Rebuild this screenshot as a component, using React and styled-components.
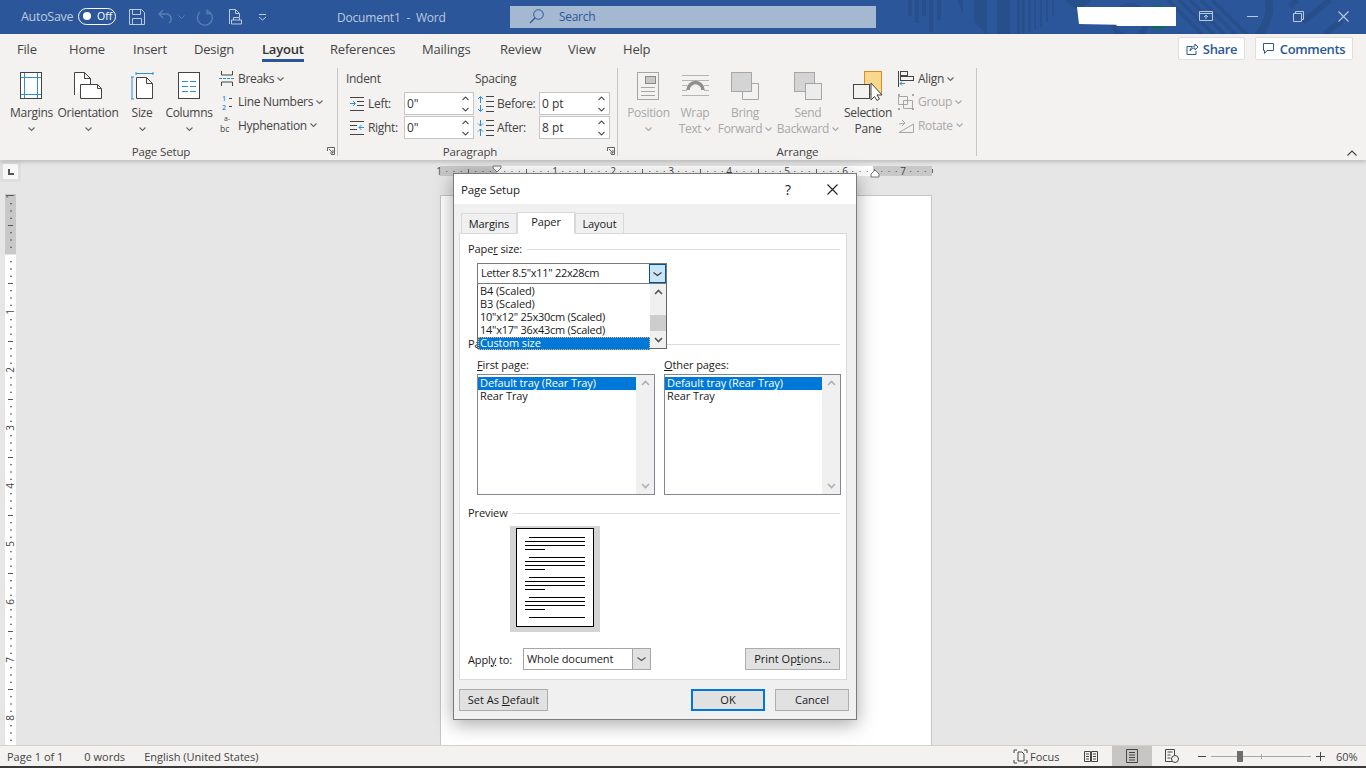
import React from 'react';
import styled, { createGlobalStyle } from 'styled-components';

const FONT = '"Open Sans", "Noto Sans", sans-serif';
const WORD_BLUE = '#2b579a';
const PATTERN_BLUE = '#274f8c';
const INK = '#444444';
const DIM = '#a8a8a8';
const SKY = '#2b8fd8';
const TITLE_DIM = '#bccadf';

const GlobalStyle = createGlobalStyle`
  html, body { margin: 0; padding: 0; }
  body { width: 1366px; height: 768px; overflow: hidden; font-family: ${FONT}; background: #e6e6e6; }
  * { box-sizing: border-box; }
  u { text-underline-offset: 1px; }
`;

const Shell = styled.div`
  position: relative;
  width: 1366px;
  height: 768px;
  display: flex;
  flex-direction: column;
  overflow: hidden;
`;

const Svg = styled.svg`
  display: block;
  flex: none;
  overflow: visible;
`;

const Icon = ({ w, h, children, ...rest }) => (
  <Svg width={w} height={h} viewBox={`0 0 ${w} ${h}`} fill="none" {...rest}>{children}</Svg>
);

/* ---------- title bar ---------- */

const TitleBar = styled.header`
  position: relative;
  flex: none;
  height: 34px;
  background: ${WORD_BLUE};
  display: flex;
  align-items: center;
  color: ${TITLE_DIM};
  font-size: 12px;
  overflow: hidden;
`;

const Pattern = styled(Svg)`
  position: absolute;
  left: 900px;
  top: 0;
  overflow: hidden;
`;

const AutoSave = styled.span`
  margin-left: 21px;
  font-size: 12.5px;
  letter-spacing: -0.3px;
  width: 57px;
  margin-top: -2px;
`;

const Toggle = styled.span`
  position: relative;
  width: 38px;
  height: 17px;
  margin-top: -2px;
  border: 1.5px solid #fff;
  border-radius: 9px;
  color: #fff;
  font-size: 10.5px;
  line-height: 14px;
  padding-left: 18px;
  &::before {
    content: '';
    position: absolute;
    left: 4px;
    top: 3px;
    width: 8px;
    height: 8px;
    border-radius: 50%;
    background: #fff;
  }
`;

const Quick = styled.div`
  display: flex;
  align-items: center;
  margin-left: 13px;
  width: 208px;
  flex: none;
`;

const DocTitle = styled.span`
  width: 173px;
  flex: none;
  font-size: 12px;
  letter-spacing: -0.2px;
  white-space: pre;
`;

const SearchBox = styled.div`
  width: 366px;
  height: 22px;
  flex: none;
  margin-top: -1px;
  background: #a4b8d2;
  color: ${WORD_BLUE};
  display: flex;
  align-items: center;
  padding-left: 19px;
  gap: 15px;
  font-size: 12px;
  letter-spacing: -0.3px;
`;

const Redacted = styled.div`
  position: absolute;
  left: 1077px;
  top: 7px;
  width: 99px;
  height: 19px;
  background: #fff;
  clip-path: polygon(0 0, 100% 0, 100% 100%, 40% 100%, 40% 94%, 2% 90%);
`;

const WindowButtons = styled.div`
  position: absolute;
  right: 17px;
  top: 0;
  height: 32px;
  display: flex;
  align-items: center;
  gap: 34px;
`;

/* ---------- ribbon ---------- */

const Ribbon = styled.section`
  position: relative;
  z-index: 2;
  flex: none;
  height: 126px;
  background: #f3f2f1;
  box-shadow: 0 2px 4px rgba(0, 0, 0, 0.18);
`;

const TabRow = styled.nav`
  height: 32px;
  display: flex;
  align-items: center;
  padding-left: 17px;
  font-size: 13px;
  letter-spacing: -0.2px;
  color: ${INK};
`;

const RibbonTab = styled.span`
  width: ${(p) => p.$w}px;
  flex: none;
  height: 32px;
  line-height: 30px;
`;

const TabText = styled.span`
  position: relative;
  display: inline-block;
  height: 32px;
  color: ${(p) => (p.$active ? '#333' : INK)};
  font-weight: ${(p) => (p.$active ? 600 : 400)};
  &::after {
    content: '';
    display: ${(p) => (p.$active ? 'block' : 'none')};
    position: absolute;
    left: 0;
    right: 0;
    top: 25px;
    height: 3px;
    background: ${WORD_BLUE};
  }
`;

const ActionButtons = styled.div`
  position: absolute;
  right: 13px;
  top: 3px;
  display: flex;
  gap: 10px;
`;

const ActionButton = styled.button`
  height: 23px;
  width: ${(p) => p.$w}px;
  border: 1px solid #e1dfdd;
  border-radius: 2px;
  background: #fff;
  color: ${WORD_BLUE};
  font: 600 13px ${FONT};
  letter-spacing: -0.35px;
  padding: 0;
  display: flex;
  align-items: center;
  justify-content: center;
  gap: 5px;
`;

const GroupRow = styled.div`
  display: flex;
  height: 94px;
`;

const Group = styled.div`
  position: relative;
  width: ${(p) => p.$w}px;
  flex: none;
  display: flex;
  flex-direction: column;
  &::after {
    content: '';
    position: absolute;
    right: 0;
    top: 2px;
    bottom: 4px;
    width: 1px;
    background: #c8c6c4;
  }
`;

const GroupBody = styled.div`
  height: 78px;
  display: flex;
  align-items: flex-start;
  padding-left: ${(p) => p.$pad || 0}px;
`;

const GroupLabel = styled.div`
  position: relative;
  height: 16px;
  line-height: 16px;
  text-align: center;
  padding-right: ${(p) => p.$shift || 0}px;
  font-size: 11.5px;
  letter-spacing: -0.15px;
  color: ${INK};
`;

const Launcher = styled(Svg)`
  position: absolute;
  right: 3px;
  top: 3px;
`;

const BigButton = styled.div`
  width: ${(p) => p.$w}px;
  flex: none;
  padding-top: 5px;
  display: flex;
  flex-direction: column;
  align-items: center;
  font-size: 12px;
  letter-spacing: -0.3px;
  line-height: 16px;
  white-space: nowrap;
  color: ${(p) => (p.$off ? DIM : INK)};
`;

const IconSlot = styled.div`
  height: 30px;
  margin-bottom: 4px;
  display: flex;
  align-items: center;
  justify-content: center;
`;

const LabelLine = styled.div`
  height: ${(p) => (p.$tall ? 15 : 16)}px;
  display: flex;
  align-items: center;
  gap: 3px;
`;

const SmallColumn = styled.div`
  margin-left: ${(p) => p.$gap}px;
  padding-top: 1px;
  display: flex;
  flex-direction: column;
`;

const SmallButton = styled.div`
  height: 23.25px;
  display: flex;
  align-items: center;
  font-size: 12px;
  letter-spacing: -0.3px;
  color: ${(p) => (p.$off ? DIM : INK)};
  gap: 3px;
`;

const SmallIcon = styled.span`
  width: ${(p) => p.$w}px;
  flex: none;
  display: flex;
  align-items: center;
`;

const FieldColumn = styled.div`
  width: ${(p) => p.$w}px;
  flex: none;
  display: flex;
  flex-direction: column;
  gap: 1px;
`;

const FieldHead = styled.div`
  height: 14px;
  line-height: 14px;
  margin: 6px 0 5px;
  font-size: 12px;
  letter-spacing: -0.3px;
  color: ${INK};
`;

const FieldRow = styled.div`
  height: 23px;
  display: flex;
  align-items: center;
  font-size: 12px;
  letter-spacing: -0.3px;
  color: ${INK};
`;

const FieldLabel = styled.span`
  width: ${(p) => p.$w}px;
  flex: none;
  padding-left: ${(p) => p.$pad}px;
  display: flex;
  align-items: center;
  white-space: nowrap;
`;

const SpinInput = styled.div`
  width: ${(p) => p.$w}px;
  height: 23px;
  flex: none;
  background: #fff;
  border: 1px solid #c6c6c6;
  display: flex;
  align-items: center;
  justify-content: space-between;
  padding: 0 4px 0 2px;
  color: #333;
  letter-spacing: 0;
`;

const CollapseIcon = styled(Svg)`
  position: absolute;
  left: 1347px;
  top: 116px;
`;

/* ---------- document area ---------- */

const Workspace = styled.main`
  flex: 1;
  min-height: 0;
  display: flex;
  background: #e6e6e6;
  overflow: hidden;
`;

const LeftRail = styled.div`
  width: 440px;
  flex: none;
  padding: 4px 0 0 3px;
`;

const RulerCorner = styled.div`
  width: 15px;
  height: 15px;
  background: #f7f7f7;
  box-shadow: 0 0 0 3px #dedede;
  display: flex;
  align-items: center;
  justify-content: center;
`;

const VerticalRulerSlot = styled.div`
  margin: 15px 0 0 2px;
`;

const PageColumn = styled.div`
  width: 493px;
  flex: none;
  padding-top: 6px;
`;

const Page = styled.div`
  width: 492px;
  height: 580px;
  margin: 17px 0 0;
  background: #fff;
  border: 1px solid #c6c6c6;
`;

const StatusBar = styled.footer`
  flex: none;
  height: 23px;
  background: #f3f2f1;
  border-top: 1px solid #d2d0ce;
  border-bottom: 2px solid #3a3a3a;
  display: flex;
  align-items: center;
  font-size: 11px;
  color: ${INK};
`;

const StatusText = styled.span`
  margin-left: ${(p) => p.$gap}px;
  flex: none;
`;

const StatusRight = styled.div`
  margin-left: auto;
  display: flex;
  align-items: center;
`;

const FocusButton = styled.span`
  width: 71px;
  flex: none;
  display: flex;
  align-items: center;
  gap: 2px;
`;

const ViewButton = styled.span`
  width: ${(p) => p.$w}px;
  height: 20px;
  flex: none;
  display: flex;
  align-items: center;
  justify-content: center;
  background: ${(p) => (p.$on ? '#c8c6c4' : 'transparent')};
  margin-left: ${(p) => p.$gap || 0}px;
`;

const ZoomTrack = styled.div`
  position: relative;
  width: 100px;
  height: 1px;
  background: #a6a6a6;
  margin-left: 5px;
  &::before {
    content: '';
    position: absolute;
    left: 50px;
    top: -2px;
    width: 1px;
    height: 5px;
    background: #a6a6a6;
  }
  &::after {
    content: '';
    position: absolute;
    left: 26px;
    top: -5px;
    width: 6px;
    height: 11px;
    background: #6e6e6e;
  }
`;

const ZoomValue = styled.span`
  width: 30px;
  margin-left: 11px;
  flex: none;
`;

/* ---------- dialog ---------- */

const Dialog = styled.div`
  position: absolute;
  z-index: 5;
  left: 453px;
  top: 173px;
  width: 404px;
  height: 547px;
  background: #f0f0f0;
  border: 1px solid #7a7a7a;
  box-shadow: 0 4px 18px rgba(0, 0, 0, 0.35);
  font-size: 11px;
  letter-spacing: -0.1px;
  color: #1a1a1a;
`;

const DialogTitle = styled.div`
  height: 30px;
  background: #fff;
  display: flex;
  align-items: center;
  padding-left: 7px;
  font-size: 11.5px;
  letter-spacing: -0.1px;
  color: #222;
`;

const TitleSpacer = styled.span`
  flex: 1;
`;

const HelpMark = styled.span`
  width: 16px;
  margin-right: 31px;
  text-align: center;
  font-size: 14px;
  color: #222;
`;

const CloseSlot = styled.span`
  margin-right: 18px;
`;

const DialogTabs = styled.div`
  height: 22px;
  margin-top: 7px;
  padding-left: 7px;
  display: flex;
  align-items: flex-end;
`;

const DialogTab = styled.div`
  width: ${(p) => p.$w}px;
  height: ${(p) => (p.$on ? 22 : 20)}px;
  line-height: ${(p) => (p.$on ? 18 : 20)}px;
  text-align: center;
  background: ${(p) => (p.$on ? '#fff' : '#f0f0f0')};
  border: 1px solid #d9d9d9;
  border-bottom: ${(p) => (p.$on ? '1px solid #fff' : 'none')};
  position: relative;
  z-index: ${(p) => (p.$on ? 1 : 0)};
  margin-bottom: ${(p) => (p.$on ? -1 : 0)}px;
`;

const Panel = styled.div`
  width: 388px;
  height: 447px;
  margin-left: 5px;
  background: #fff;
  border: 1px solid #d9d9d9;
  padding: 8px 6px 0 8px;
`;

const SectionHead = styled.div`
  height: 14px;
  line-height: 14px;
  margin-top: ${(p) => p.$top || 0}px;
  display: flex;
  align-items: center;
  gap: 5px;
  &::after {
    content: '';
    flex: 1;
    height: 1px;
    background: #dcdcdc;
  }
`;

const ComboWrap = styled.div`
  position: relative;
  width: 190px;
  height: 21px;
  margin: 7px 0 0 9px;
`;

const Combo = styled.div`
  width: 100%;
  height: 100%;
  background: #fff;
  border: 1px solid #7a7a7a;
  display: flex;
  align-items: center;
  padding-left: 3px;
  justify-content: space-between;
  letter-spacing: -0.3px;
  line-height: 17px;
`;

const ComboText = styled.span`
  margin-top: -2px;
`;

const ComboArrow = styled.span`
  width: 17px;
  height: 19px;
  flex: none;
  background: #cce4f7;
  border: 1px solid #005499;
  display: flex;
  align-items: center;
  justify-content: center;
`;

const ComboList = styled.div`
  position: absolute;
  left: 0;
  top: 21px;
  width: 190px;
  height: 65px;
  background: #fff;
  border: 1px solid #646464;
  border-top: none;
  display: flex;
`;

const Options = styled.div`
  flex: 1;
  min-width: 0;
  padding-top: ${(p) => p.$top}px;
`;

const Option = styled.div`
  height: 13px;
  line-height: 11px;
  padding-left: 2px;
  white-space: nowrap;
  letter-spacing: ${(p) => (p.$tight ? '-0.27px' : 'inherit')};
  background: ${(p) => (p.$on ? '#0078d7' : 'transparent')};
  color: ${(p) => (p.$on ? '#fff' : '#1a1a1a')};
  outline: ${(p) => (p.$focus ? '1px dotted #f4b06a' : 'none')};
  outline-offset: -1px;
`;

const ScrollBar = styled.div`
  width: ${(p) => p.$w}px;
  flex: none;
  background: #f0f0f0;
  display: flex;
  flex-direction: column;
  justify-content: space-between;
  align-items: center;
  padding: 5px 0;
  position: relative;
`;

const ScrollThumb = styled.div`
  position: absolute;
  left: 0;
  right: 0;
  top: 31px;
  height: 16px;
  background: #cdcdcd;
`;

const TrayRow = styled.div`
  display: flex;
  gap: 9px;
  margin: 7px 0 0 9px;
`;

const TrayColumn = styled.div`
  width: ${(p) => p.$w}px;
  flex: none;
`;

const TrayLabel = styled.div`
  height: 14px;
  line-height: 14px;
  margin-bottom: 2px;
`;

const TrayList = styled.div`
  height: 121px;
  border: 1px solid #828790;
  background: #fff;
  display: flex;
  align-items: stretch;
`;

const PreviewFrame = styled.div`
  width: 90px;
  height: 106px;
  margin: 6px 0 0 42px;
  background: #d4d4d4;
  padding: 2px 0 0 6px;
`;

const PreviewPage = styled.div`
  width: 78px;
  height: 99px;
  background: #fff;
  border: 1px solid #000;
`;

const ApplyRow = styled.div`
  height: 22px;
  margin-top: 16px;
  display: flex;
  align-items: center;
`;

const ApplyLabel = styled.span`
  width: 55px;
  flex: none;
`;

const ApplySelect = styled.div`
  width: 128px;
  height: 22px;
  flex: none;
  border: 1px solid #a6a6a6;
  background: #fff;
  display: flex;
  align-items: center;
  justify-content: space-between;
  padding-left: 3px;
  line-height: 16px;
`;

const ApplyArrow = styled.span`
  width: 18px;
  height: 20px;
  background: #e1e1e1;
  border-left: 1px solid #a6a6a6;
  display: flex;
  align-items: center;
  justify-content: center;
`;

const DialogButton = styled.button`
  width: ${(p) => p.$w}px;
  height: 22px;
  flex: none;
  padding: 0 0 2px;
  margin-left: ${(p) => p.$gap || 0}px;
  background: #e1e1e1;
  border: ${(p) => (p.$primary ? '2px solid #0078d7' : '1px solid #adadad')};
  font: 11px ${FONT};
  color: #1a1a1a;
`;

const DialogFooter = styled.div`
  display: flex;
  margin: 9px 0 0 5px;
`;

/* ---------- drawings ---------- */

const Caret = ({ color = '#666', size = 7 }) => (
  <Icon w={size} h={4}>
    <path d={`M.5.5 ${size / 2} 3.5 ${size - 0.5}.5`} stroke={color} strokeWidth="1.1" />
  </Icon>
);

const SpinArrows = () => (
  <Icon w={7} h={18}>
    <path d="M.5 5 3.5 2 6.5 5M.5 13 3.5 16 6.5 13" stroke="#555" strokeWidth="1.1" />
  </Icon>
);

const TitlePattern = () => (
  <Pattern width="466" height="34" viewBox="0 0 466 34" fill="none">
    <g fill={PATTERN_BLUE}>
      <rect x="8" y="0" width="4" height="16" />
      <rect x="15" y="0" width="4" height="23" />
      <rect x="22" y="0" width="4" height="16" />
      <rect x="29" y="0" width="4" height="32" />
      <rect x="37" y="0" width="4" height="20" />
      <path d="M57 0h6v14z" />
      <path d="M74 0h13v34h-1L74 22z" />
      <rect x="97" y="0" width="13" height="34" />
      <rect x="117" y="0" width="3" height="34" />
      <rect x="122" y="0" width="3" height="33" />
      <rect x="128" y="0" width="3" height="32" />
      <rect x="134" y="0" width="2" height="30" />
      <rect x="140" y="0" width="2" height="27" />
      <rect x="146" y="0" width="2" height="22" />
      <rect x="152" y="0" width="2" height="15" />
      <circle cx="178" cy="-6" r="14" />
    </g>
    <circle cx="230" cy="22" r="16" stroke={PATTERN_BLUE} strokeWidth="6" />
    <circle cx="258" cy="17" r="12" fill="#0f6b52" />
    <g stroke={PATTERN_BLUE} strokeWidth="3.5">
      <path d="M268 0 302 34M279 0 313 34M290 0 324 34M301 0 335 34M312 0 346 34" />
    </g>
    <path d="M368 -2C372 12 366 26 358 36" stroke={PATTERN_BLUE} strokeWidth="8" />
    <path d="M403 22 430 0M390 6 397 0M425 34 442 20" stroke={PATTERN_BLUE} strokeWidth="6" />
  </Pattern>
);

const SaveIcon = () => (
  <Icon w={16} h={16}>
    <path d="M.5.5h12l3 3v12H.5z M3.5.5v5h8v-5 M3.5 15.5v-6h9v6" stroke={TITLE_DIM} />
  </Icon>
);

const UndoIcon = () => (
  <Icon w={16} h={16} style={{ marginLeft: 13 }}>
    <path d="M5 1 1 5l4 4M1 5h8a5 5 0 0 1 2 9" stroke="#5d7fb4" strokeWidth="1.3" />
  </Icon>
);

const RedoIcon = () => (
  <Icon w={17} h={16} style={{ marginLeft: 11 }}>
    <path d="M11 1.5A7.5 7.5 0 1 1 4 3M11 .5v4h4" stroke="#5d7fb4" strokeWidth="1.3" />
  </Icon>
);

const PreviewIcon = () => (
  <Icon w={15} h={16} style={{ marginLeft: 15 }}>
    <path d="M1.5 15V.5h6l4 4V8M7.5.5v4h4M3.5 11h10v4h-10zM5.5 11V8.5h6V11" stroke={TITLE_DIM} />
  </Icon>
);

const CustomizeIcon = () => (
  <Icon w={9} h={7} style={{ marginLeft: 15 }}>
    <path d="M1 .5h7M1 3l3.5 3L8 3" stroke={TITLE_DIM} />
  </Icon>
);

const MagnifierIcon = () => (
  <Icon w={15} h={15}>
    <circle cx="9.5" cy="5.5" r="4.8" stroke={WORD_BLUE} />
    <path d="M6 9 1 14" stroke={WORD_BLUE} strokeWidth="1.2" />
  </Icon>
);

const MarginsIcon = () => (
  <Icon w={23} h={28}>
    <rect x=".5" y=".5" width="21" height="26" fill="#fff" stroke={INK} />
    <path d="M4.5 1v25M17.5 1v25M1 5.5h20M1 22.5h20" stroke={SKY} />
  </Icon>
);

const OrientationIcon = () => (
  <Icon w={29} h={28}>
    <path d="M.5 23V.5h10l6 6V12M10.5.5v6h6" stroke={INK} fill="#fff" />
    <path d="M6.5 12.5h17l4 4v10h-21z" stroke={INK} fill="#fff" />
    <path d="M23.5 12.5v4h4" stroke={INK} />
  </Icon>
);

const SizeIcon = () => (
  <Icon w={22} h={28}>
    <path d="M5.5 26.5V5.5h10l6 6v15zM15.5 5.5v6h6" stroke={INK} fill="#fff" />
    <path d="M5 1.5h17M5 0v3M22 0v3M1 5v22M0 5h3M0 27h3" stroke={SKY} />
  </Icon>
);

const ColumnsIcon = () => (
  <Icon w={23} h={28}>
    <rect x=".5" y=".5" width="21" height="26" fill="#fff" stroke={INK} />
    <path d="M4 9.5h6M12 9.5h6M4 14.5h6M12 14.5h6M4 19.5h6M12 19.5h6" stroke={SKY} />
  </Icon>
);

const BreaksIcon = () => (
  <Icon w={16} h={16}>
    <path d="M2.5 0v4h11V0M2.5 15v-4h11v4" stroke={INK} />
    <path d="M0 7.5h16" stroke={SKY} strokeDasharray="3 1" />
  </Icon>
);

const GlyphText = styled.text`
  font-family: ${FONT};
  letter-spacing: 0;
`;

const LineNumbersIcon = () => (
  <Icon w={16} h={16}>
    <GlyphText x="3" y="6.500" fontSize="7" fontWeight="600" fill={SKY}>1</GlyphText>
    <GlyphText x="3" y="15.500" fontSize="7" fontWeight="600" fill={SKY}>2</GlyphText>
    <path d="M10 4.500h3M10 12.500h3" stroke={INK} />
  </Icon>
);

const HyphenationIcon = () => (
  <Icon w={16} h={16}>
    <GlyphText x="5" y="3.800" fontSize="7" fill={INK}>a-</GlyphText>
    <GlyphText x="1" y="15" fontSize="8.500" fill={INK}>bc</GlyphText>
  </Icon>
);

const IndentLeftIcon = () => (
  <Icon w={15} h={14}>
    <path d="M0 .5h14M7 4.500h7M7 8.500h7M0 13.500h14" stroke={INK} />
    <path d="M0 6.500h5M3 4l2.500 2.500L3 9" stroke={SKY} />
  </Icon>
);

const IndentRightIcon = () => (
  <Icon w={15} h={14}>
    <path d="M0 .5h14M0 4.500h7M0 8.500h7M0 13.500h14" stroke={INK} />
    <path d="M14 6.500H9M11.500 4 9 6.500 11.500 9" stroke={SKY} />
  </Icon>
);

const SpaceBeforeIcon = () => (
  <Icon w={17} h={16}>
    <path d="M3.500 1v6M1 3l2.500-2.500L6 3M3.500 9v6M1 13l2.500 2.500L6 13" stroke={SKY} />
    <path d="M9 .5h8M9 5.500h8M9 10.500h8M9 15.500h8" stroke={INK} />
  </Icon>
);

const SpaceAfterIcon = () => (
  <Icon w={17} h={16}>
    <path d="M3.500 0v6M1 3.500 3.500 6 6 3.500M3.500 9v7M1 11.500 3.500 9 6 11.500" stroke={SKY} />
    <path d="M9 .5h8M9 5.500h8M9 10.500h8M9 15.500h8" stroke={INK} />
  </Icon>
);

const PositionIcon = () => (
  <Icon w={23} h={28}>
    <rect x=".5" y=".5" width="21" height="27" fill="#f3f2f1" stroke="#a6a6a6" />
    <rect x="8.500" y="4.500" width="10" height="7" fill="#c8c8c8" stroke="#8a8a8a" />
    <path d="M4 15.500h14M4 19.500h14M4 23.500h14" stroke="#a6a6a6" />
  </Icon>
);

const WrapIcon = () => (
  <Icon w={29} h={22}>
    <path d="M1 .5h27M1 5.500h27M1 10.500h5M23 10.500h5M1 15.500h5M23 15.500h5M1 20.500h27" stroke="#b4b4b4" />
    <path d="M7 15a7.500 7.500 0 0 1 15 0" stroke="#8f8f8f" strokeWidth="3.500" />
  </Icon>
);

const StackIcon = ({ frontOnTop }) => (
  <Icon w={29} h={28}>
    <rect x=".5" y=".5" width="20" height="19" fill="#d4d4d4" stroke="#a6a6a6" />
    {frontOnTop ? (
      <rect x="11.500" y="11.500" width="16" height="16" fill="#ececec" stroke="#a6a6a6" />
    ) : (
      <path d="M20.500 11.500h7v16h-16v-8" stroke="#a6a6a6" />
    )}
  </Icon>
);

const SelectionIcon = () => (
  <Icon w={31} h={30}>
    <rect x="11.500" y=".5" width="17" height="23" fill="#f8d88f" stroke="#e08a1c" />
    <rect x=".5" y="13.500" width="16" height="14" fill="#f3f2f1" stroke={INK} />
    <path d="M18 12v17l3.500-3.500 2.500 4 2.500-1.500-2.500-4H29z" fill="#fff" stroke={INK} />
  </Icon>
);

const AlignIcon = () => (
  <Icon w={16} h={16}>
    <path d="M.5 0v16" stroke={INK} />
    <rect x="2.500" y=".5" width="7" height="4" stroke={INK} />
    <rect x="2.500" y="5.500" width="13" height="4" stroke={INK} />
    <path d="M7 12.500H2M4 10.500l-2 2 2 2" stroke={SKY} />
  </Icon>
);

const GroupIcon = () => (
  <Icon w={16} h={16}>
    <path d="M.5 2.500h9v8h-9zM5.500 6.500h9v8h-9z" stroke="#a6a6a6" />
    <path d="M0 0h2v2H0zM14 14h2v2h-2zM14 0h2v2h-2zM0 14h2v2H0z" fill="#a6a6a6" />
  </Icon>
);

const RotateIcon = () => (
  <Icon w={16} h={16}>
    <path d="M1 15.500h14.500V7z M1 7l6-1M4 3l3 3-3 3" stroke="#a6a6a6" />
  </Icon>
);

const LauncherIcon = () => (
  <Launcher width="8" height="8" viewBox="0 0 8 8" fill="none">
    <path d="M.5 4V.5H7.500V7.500H4M2 2l4 4M6 3v3H3" stroke="#666" />
  </Launcher>
);

const TICK = 7.25;

const HRuler = () => {
  const ticks = [];
  for (let i = -8; i <= 60; i++) {
    if (i % 8 === 0) continue;
    const x = 57 + i * TICK;
    ticks.push(<rect key={i} x={x} y={i % 4 === 0 ? 3 : 5} width="1" height={i % 4 === 0 ? 4 : 1} fill={i % 4 === 0 ? '#666' : '#555'} />);
  }
  const numbers = [-1, 1, 2, 3, 4, 5, 6, 7];
  return (
    <Svg width="493" height="12" viewBox="0 0 493 12">
      <rect x="0" y="0" width="492" height="10" fill="#c8c8c8" />
      <rect x="57" y="0" width="376" height="10" fill="#fff" />
      {ticks}
      {numbers.map((n) => (
        <GlyphText key={n} x={57 + n * 58} y="9" fontSize="10" fill="#444" textAnchor="middle">{Math.abs(n)}</GlyphText>
      ))}
      <path d="M53 0h8v2l-4 4-4-4z" fill="#fff" stroke="#777" />
      <path d="M431 11V8l4-4 4 4v3z" fill="#fff" stroke="#777" />
    </Svg>
  );
};

const VRuler = () => {
  const ticks = [];
  for (let i = -8; i <= 68; i++) {
    if (i % 8 === 0) continue;
    const y = 60 + i * TICK;
    ticks.push(<rect key={i} x={i % 4 === 0 ? 3 : 5} y={y} width={i % 4 === 0 ? 5 : 2} height="1" fill="#555" />);
  }
  const numbers = [-1, 1, 2, 3, 4, 5, 6, 7, 8];
  return (
    <Svg width="11" height="552" viewBox="0 0 11 552">
      <rect width="11" height="60" fill="#c8c8c8" />
      <rect y="61" width="11" height="491" fill="#fff" />
      {ticks}
      {numbers.map((n) => {
        const y = 60 + n * 58;
        return (
          <GlyphText key={n} x="5.500" y={y + 3} fontSize="10" fill="#444" textAnchor="middle" transform={`rotate(-90 5.500 ${y})`}>{Math.abs(n)}</GlyphText>
        );
      })}
    </Svg>
  );
};

const PREVIEW_PARAS = [8, 28, 48, 68];

const PreviewLines = () => (
  <Icon w={76} h={97}>
    {PREVIEW_PARAS.map((y) => (
      <path key={y} d={`M12 ${y + 0.5}h56M8 ${y + 4.5}h60M8 ${y + 8.5}h60M8 ${y + 12.5}h20`} stroke="#000" />
    ))}
    <path d="M12 88.500h56" stroke="#000" />
  </Icon>
);

const CloseX = ({ color, size = 11 }) => (
  <Icon w={size} h={size}>
    <path d={`M.5.5l${size - 1} ${size - 1}M${size - 0.5}.5l-${size - 1} ${size - 1}`} stroke={color} strokeWidth="1.1" />
  </Icon>
);

const ScrollArrow = ({ up, color = '#555' }) => (
  <Icon w={9} h={6}>
    <path d={up ? 'M1 5 4.500 1.500 8 5' : 'M1 1 4.500 4.500 8 1'} stroke={color} strokeWidth="1.600" />
  </Icon>
);

const TrayBox = ({ w, label }) => (
  <TrayColumn $w={w}>
    <TrayLabel><u>{label[0]}</u>{label.slice(1)}</TrayLabel>
    <TrayList>
      <Options $top={2}>
        <Option $on>Default tray (Rear Tray)</Option>
        <Option>Rear Tray</Option>
      </Options>
      <ScrollBar $w={18}>
        <ScrollArrow up color="#b0b0b0" />
        <ScrollArrow color="#b0b0b0" />
      </ScrollBar>
    </TrayList>
  </TrayColumn>
);

const PageSetupDialog = () => (
  <Dialog>
    <DialogTitle>
      Page Setup
      <TitleSpacer />
      <HelpMark>?</HelpMark>
      <CloseSlot><CloseX color="#222" /></CloseSlot>
    </DialogTitle>
    <DialogTabs>
      <DialogTab $w={56}>Margins</DialogTab>
      <DialogTab $w={58} $on>Paper</DialogTab>
      <DialogTab $w={49}>Layout</DialogTab>
    </DialogTabs>
    <Panel>
      <SectionHead>
        <span>Pape<u>r</u> size:</span>
      </SectionHead>
      <ComboWrap>
        <Combo>
          <ComboText>Letter 8.5"x11" 22x28cm</ComboText>
          <ComboArrow><Caret color="#333" size={9} /></ComboArrow>
        </Combo>
        <ComboList>
          <Options $top={1}>
            <Option>B4 (Scaled)</Option>
            <Option>B3 (Scaled)</Option>
            <Option $tight>10"x12" 25x30cm (Scaled)</Option>
            <Option $tight>14"x17" 36x43cm (Scaled)</Option>
            <Option $on $focus>Custom size</Option>
          </Options>
          <ScrollBar $w={16}>
            <ScrollArrow up />
            <ScrollThumb />
            <ScrollArrow />
          </ScrollBar>
        </ComboList>
      </ComboWrap>
      <SectionHead $top={53}>
        <span>Pa</span>
      </SectionHead>
      <TrayRow>
        <TrayBox w={178} label="First page:" />
        <TrayBox w={177} label="Other pages:" />
      </TrayRow>
      <SectionHead $top={11}>
        <span>Preview</span>
      </SectionHead>
      <PreviewFrame>
        <PreviewPage><PreviewLines /></PreviewPage>
      </PreviewFrame>
      <ApplyRow>
        <ApplyLabel>Appl<u>y</u> to:</ApplyLabel>
        <ApplySelect>
          Whole document
          <ApplyArrow><Caret color="#555" size={9} /></ApplyArrow>
        </ApplySelect>
        <DialogButton $w={95} $gap={94}>Print Op<u>t</u>ions...</DialogButton>
      </ApplyRow>
    </Panel>
    <DialogFooter>
      <DialogButton $w={89}>Set As <u>D</u>efault</DialogButton>
      <DialogButton $w={74} $gap={143} $primary>OK</DialogButton>
      <DialogButton $w={74} $gap={10}>Cancel</DialogButton>
    </DialogFooter>
  </Dialog>
);

const Big = ({ w, off, icon, lines, caret }) => (
  <BigButton $w={w} $off={off}>
    <IconSlot>{icon}</IconSlot>
    {lines.map((line, i) => (
      <LabelLine key={line} $tall={i > 0}>
        {line}
        {caret && i > 0 && <Caret color={DIM} />}
      </LabelLine>
    ))}
    {caret && lines.length === 1 && <LabelLine $tall><Caret color={off ? DIM : '#666'} /></LabelLine>}
  </BigButton>
);

const Small = ({ icon, w = 16, off, label }) => (
  <SmallButton $off={off}>
    <SmallIcon $w={w}>{icon}</SmallIcon>
    {label}
    <Caret color={off ? DIM : '#666'} />
  </SmallButton>
);

const RIBBON_TABS = [
  ['File', 52],
  ['Home', 64],
  ['Insert', 61],
  ['Design', 68],
  ['Layout', 68],
  ['References', 92],
  ['Mailings', 78],
  ['Review', 68],
  ['View', 55],
  ['Help', 50],
];

const App = () => (
  <Shell>
    <GlobalStyle />
    <TitleBar>
      <TitlePattern />
      <AutoSave>AutoSave</AutoSave>
      <Toggle>Off</Toggle>
      <Quick>
        <SaveIcon />
        <UndoIcon />
        <Icon w={7} h={4} style={{ marginLeft: 4 }}><path d="M.5.5l3 3 3-3" stroke="#5d7fb4" /></Icon>
        <RedoIcon />
        <PreviewIcon />
        <CustomizeIcon />
      </Quick>
      <DocTitle>Document1  -  Word</DocTitle>
      <SearchBox>
        <MagnifierIcon />
        Search
      </SearchBox>
      <Redacted />
      <WindowButtons>
        <Icon w={14} h={10}>
          <path d="M.5.5h13v9H.5zM.5 2.500h13M7 8V4M5 6l2-2 2 2" stroke={TITLE_DIM} />
        </Icon>
        <Icon w={12} h={1}><path d="M0 .5h11" stroke={TITLE_DIM} /></Icon>
        <Icon w={11} h={11}>
          <path d="M.5 2.500h8v8h-8zM2.500 2.500v-2h8v8h-2" stroke={TITLE_DIM} />
        </Icon>
        <CloseX color={TITLE_DIM} />
      </WindowButtons>
    </TitleBar>

    <Ribbon>
      <TabRow>
        {RIBBON_TABS.map(([name, w]) => (
          <RibbonTab key={name} $w={w}>
            <TabText $active={name === 'Layout'}>{name}</TabText>
          </RibbonTab>
        ))}
      </TabRow>
      <ActionButtons>
        <ActionButton $w={67}>
          <Icon w={12} h={12}>
            <path d="M6 3.500H1v8h9V8M4 8c0-3 3-5 5-5V1l3 3-3 3V5C7 5 5 6 4 8z" stroke={WORD_BLUE} />
          </Icon>
          Share
        </ActionButton>
        <ActionButton $w={98}>
          <Icon w={12} h={12}>
            <path d="M.5.5h10v7H4L1.500 10.500V7.500H.5z" stroke={WORD_BLUE} />
          </Icon>
          Comments
        </ActionButton>
      </ActionButtons>
      <GroupRow>
        <Group $w={338}>
          <GroupBody $pad={3}>
            <Big w={57} icon={<MarginsIcon />} lines={['Margins']} caret />
            <Big w={56} icon={<OrientationIcon />} lines={['Orientation']} caret />
            <Big w={52} icon={<SizeIcon />} lines={['Size']} caret />
            <Big w={42} icon={<ColumnsIcon />} lines={['Columns']} caret />
            <SmallColumn $gap={9}>
              <Small icon={<BreaksIcon />} label="Breaks" />
              <Small icon={<LineNumbersIcon />} label="Line Numbers" />
              <Small icon={<HyphenationIcon />} label="Hyphenation" />
            </SmallColumn>
          </GroupBody>
          <GroupLabel $shift={16}>Page Setup<LauncherIcon /></GroupLabel>
        </Group>
        <Group $w={280}>
          <GroupBody $pad={8}>
            <FieldColumn $w={129}>
              <FieldHead>Indent</FieldHead>
              <FieldRow>
                <FieldLabel $w={58} $pad={4}><SmallIcon $w={18}><IndentLeftIcon /></SmallIcon>Left:</FieldLabel>
                <SpinInput $w={70}>0"<SpinArrows /></SpinInput>
              </FieldRow>
              <FieldRow>
                <FieldLabel $w={58} $pad={4}><SmallIcon $w={18}><IndentRightIcon /></SmallIcon>Right:</FieldLabel>
                <SpinInput $w={70}>0"<SpinArrows /></SpinInput>
              </FieldRow>
            </FieldColumn>
            <FieldColumn $w={135}>
              <FieldHead>Spacing</FieldHead>
              <FieldRow>
                <FieldLabel $w={64} $pad={2}><SmallIcon $w={20}><SpaceBeforeIcon /></SmallIcon>Before:</FieldLabel>
                <SpinInput $w={71}>0 pt<SpinArrows /></SpinInput>
              </FieldRow>
              <FieldRow>
                <FieldLabel $w={64} $pad={2}><SmallIcon $w={20}><SpaceAfterIcon /></SmallIcon>After:</FieldLabel>
                <SpinInput $w={71}>8 pt<SpinArrows /></SpinInput>
              </FieldRow>
            </FieldColumn>
          </GroupBody>
          <GroupLabel $shift={16}>Paragraph<LauncherIcon /></GroupLabel>
        </Group>
        <Group $w={359}>
          <GroupBody $pad={7}>
            <Big w={47} off icon={<PositionIcon />} lines={['Position']} caret />
            <Big w={46} off icon={<WrapIcon />} lines={['Wrap', 'Text']} caret />
            <Big w={54} off icon={<StackIcon />} lines={['Bring', 'Forward']} caret />
            <Big w={72} off icon={<StackIcon frontOnTop />} lines={['Send', 'Backward']} caret />
            <Big w={48} icon={<SelectionIcon />} lines={['Selection', 'Pane']} />
            <SmallColumn $gap={6}>
              <Small icon={<AlignIcon />} w={17} label="Align" />
              <Small icon={<GroupIcon />} w={17} off label="Group" />
              <Small icon={<RotateIcon />} w={17} off label="Rotate" />
            </SmallColumn>
          </GroupBody>
          <GroupLabel>Arrange</GroupLabel>
        </Group>
      </GroupRow>
      <CollapseIcon width="10" height="6" viewBox="0 0 10 6" fill="none">
        <path d="M.5 5.500 5 1l4.500 4.500" stroke="#444" strokeWidth="1.100" />
      </CollapseIcon>
    </Ribbon>

    <Workspace>
      <LeftRail>
        <RulerCorner>
          <Icon w={6} h={6}><path d="M1 0v5h5" stroke="#555" strokeWidth="2" /></Icon>
        </RulerCorner>
        <VerticalRulerSlot><VRuler /></VerticalRulerSlot>
      </LeftRail>
      <PageColumn>
        <HRuler />
        <Page />
      </PageColumn>
    </Workspace>

    <StatusBar>
      <StatusText $gap={7}>Page 1 of 1</StatusText>
      <StatusText $gap={21}>0 words</StatusText>
      <StatusText $gap={19}>English (United States)</StatusText>
      <StatusRight>
        <FocusButton>
          <Icon w={15} h={15}>
            <path d="M1 4V1h3M11 1h3v3M1 11v3h3M11 14h3v-3M5 12V3h4l2 2v7z" stroke={INK} />
          </Icon>
          Focus
        </FocusButton>
        <ViewButton $w={14}>
          <Icon w={14} h={12}><path d="M.5 1.500h6v10h-6zM7.500 1.500h6v10h-6zM2 4h3M2 6.500h3M2 9h3M9 4h3M9 6.500h3M9 9h3" stroke={INK} /></Icon>
        </ViewButton>
        <ViewButton $w={40} $gap={14} $on>
          <Icon w={12} h={14}><path d="M.5.5h11v13H.5zM3 3.500h6M3 6h6M3 8.500h6M3 11h6" stroke={INK} /></Icon>
        </ViewButton>
        <ViewButton $w={14} $gap={13}>
          <Icon w={14} h={14}><path d="M.5.5h9v12H.5zM2.500 3h5M2.500 6h3M2.500 9h3" stroke={INK} /><circle cx="10" cy="10" r="3.500" fill="#f3f2f1" stroke={INK} /></Icon>
        </ViewButton>
        <Icon w={8} h={1} style={{ marginLeft: 19 }}><path d="M0 .5h8" stroke={INK} /></Icon>
        <ZoomTrack />
        <Icon w={9} h={9} style={{ marginLeft: 5 }}><path d="M0 4.500h9M4.500 0v9" stroke={INK} /></Icon>
        <ZoomValue>60%</ZoomValue>
      </StatusRight>
    </StatusBar>

    <PageSetupDialog />
  </Shell>
);

export default App;
